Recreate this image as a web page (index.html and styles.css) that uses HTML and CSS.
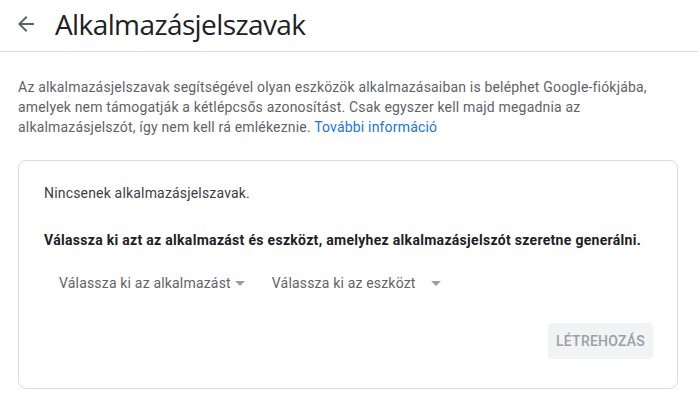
FILE: index.html
```html
<!DOCTYPE html>
<html lang="hu">
<head>
  <meta charset="UTF-8" />
  <title>Alkalmazásjelszavak</title>
  <link rel="stylesheet" href="styles.css">
</head>
<body>
  <header class="topbar">
    <button class="back-btn" aria-label="Vissza">
      <svg width="16" height="16" viewBox="0 0 16 16"><path d="M16 7H3.83l5.59-5.59L8 0 0 8l8 8 1.41-1.41L3.83 9H16z" fill="#5f6368"/></svg>
    </button>
    <h1>Alkalmazásjelszavak</h1>
  </header>

  <main class="content">
    <p class="intro">Az alkalmazásjelszavak segítségével olyan eszközök alkalmazásaiban is beléphet Google-fiókjába, amelyek nem támogatják a kétlépcsős azonosítást. Csak egyszer kell majd megadnia az alkalmazásjelszót, így nem kell rá emlékeznie. <a href="#">További információ</a></p>

    <div class="card">
      <p class="empty">Nincsenek alkalmazásjelszavak.</p>
      <p class="prompt">Válassza ki azt az alkalmazást és eszközt, amelyhez alkalmazásjelszót szeretne generálni.</p>

      <div class="selects">
        <div class="select select-app">
          <span class="select-label">Válassza ki az alkalmazást</span>
          <span class="caret"></span>
        </div>
        <div class="select select-device">
          <span class="select-label">Válassza ki az eszközt</span>
          <span class="caret"></span>
        </div>
      </div>

      <div class="actions">
        <button class="create-btn" disabled>LÉTREHOZÁS</button>
      </div>
    </div>
  </main>
</body>
</html>
```

FILE: styles.css
```css
* { box-sizing: border-box; margin: 0; padding: 0; }
body { font-family: Roboto, 'Liberation Sans', sans-serif; background: #fff; color: #202124; letter-spacing: 0.18px; }

.topbar {
  display: flex;
  align-items: center;
  height: 52px;
  padding: 0 0 4px 18px;
  border-bottom: 1px solid #dadce0;
}

.back-btn {
  display: flex;
  background: transparent;
  border: none;
  margin-right: 21px;
  cursor: pointer;
}

.topbar h1 {
  font-family: 'Open Sans', Roboto, sans-serif;
  font-weight: 400;
  font-size: 28px;
  color: #202124;
  letter-spacing: -0.6px;
}

.content { padding: 25px 20px 0 18px; }

.intro {
  font-size: 14px;
  line-height: 20px;
  color: #5f6368;
}

.intro a { color: #1a73e8; text-decoration: none; }

.card {
  margin-top: 23px;
  width: 660px;
  border: 1px solid #dadce0;
  border-radius: 8px;
  padding: 22px 24px 29px 25px;
  font-size: 14px;
  line-height: 20px;
}

.empty { color: #3c4043; }

.prompt {
  margin-top: 27px;
  font-weight: 700;
  color: #202124;
  letter-spacing: 0.3px;
}

.selects {
  display: flex;
  margin-top: 23px;
  padding-left: 15px;
  gap: 27px;
}

.select {
  display: flex;
  align-items: center;
  color: #5f6368;
  cursor: pointer;
}

.caret {
  width: 0;
  height: 0;
  border-left: 5px solid transparent;
  border-right: 5px solid transparent;
  border-top: 5px solid #9e9e9e;
  margin-left: 4px;
}

.select-device .caret { margin-left: 15px; }

.actions {
  display: flex;
  justify-content: flex-end;
  margin-top: 30px;
}

.create-btn {
  font-family: Roboto, sans-serif;
  font-size: 14px;
  font-weight: 500;
  letter-spacing: 0.25px;
  color: #9aa0a6;
  background: #f1f3f4;
  border: none;
  border-radius: 4px;
  height: 36px;
  padding: 0 8px;
  width: 105px;
}
```
